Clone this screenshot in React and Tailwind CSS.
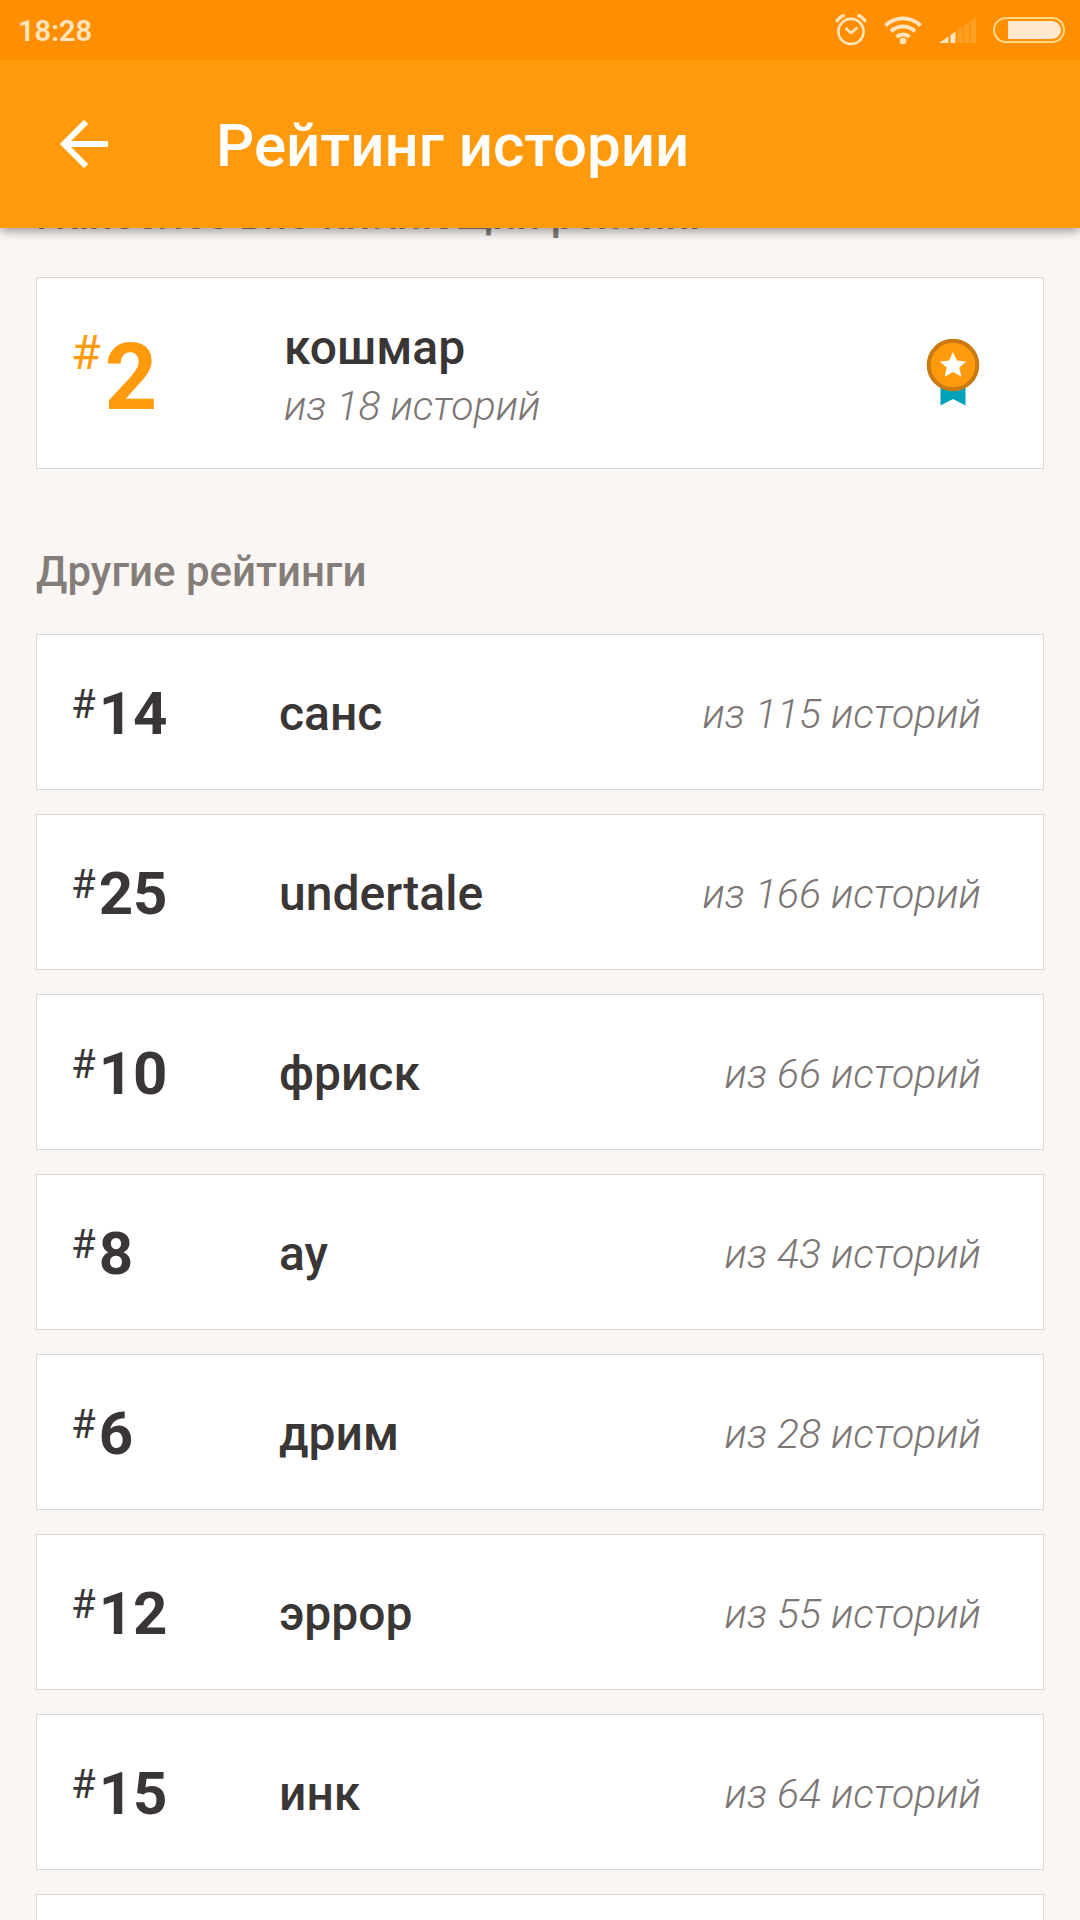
import React from 'react';

const rankings = [
  { rank: 14, tag: 'санс', total: 115 },
  { rank: 25, tag: 'undertale', total: 166 },
  { rank: 10, tag: 'фриск', total: 66 },
  { rank: 8, tag: 'ау', total: 43 },
  { rank: 6, tag: 'дрим', total: 28 },
  { rank: 12, tag: 'эррор', total: 55 },
  { rank: 15, tag: 'инк', total: 64 },
];

const StatusBar = () => (
  <div className="flex h-15 items-center justify-between bg-[#ff8f00] pl-[18px] pr-[15px] text-[#ffe4c0]">
    <span className="pt-0.5 text-[29px] leading-8 font-semibold">18:28</span>
    <div className="flex items-center">
      {/* Alarm */}
      <svg className="mr-4 h-8 w-8" viewBox="0 0 32 32" fill="none" stroke="currentColor" strokeWidth="2.6">
        <circle cx="16" cy="17.500" r="12.6" />
        <path d="M10.5 14l5.5 5 6.500-5.500" />
        <path d="M1.500 8Q4 3 9.500 1M30.500 8Q28 3 22.500 1" strokeWidth="3.200" />
      </svg>
      {/* Wi-Fi */}
      <svg className="mr-4 h-8 w-10" viewBox="0 0 40 32" fill="none" stroke="currentColor" strokeWidth="3.900">
        <path d="M2.500 11.500a25 25 0 0 1 35 0M8 17.500a17 17 0 0 1 24 0M13.500 23a9.500 9.500 0 0 1 13 0" />
        <circle cx="20" cy="27" r="3.300" fill="currentColor" stroke="none" />
      </svg>
      {/* Signal */}
      <svg className="mr-4 h-7 w-[38px]" viewBox="0 0 38 28" fill="currentColor">
        <path d="M0 27l9.500-6.500V27zM11.500 19l5-3.500V27h-5z" />
        <path
          opacity=".2"
          d="M18.500 13.500l5-3.500v17h-5zM25 9.500l5-3.500v21h-5zM31.500 5l5.500-4v26h-5.500z"
        />
      </svg>
      {/* Battery */}
      <svg className="h-7 w-[72px]" viewBox="0 0 72 28">
        <rect x="1" y="2" width="70" height="24" rx="12" fill="none" stroke="#ffd98a" strokeWidth="2" />
        <path d="M15 5h44a9 9 0 0 1 0 18H15z" fill="#ffe8cf" />
      </svg>
    </div>
  </div>
);

const Medal = () => (
  <svg className="mb-0.5 h-[67px] w-[54px]" viewBox="0 0 54 67" role="img" aria-label="Награда">
    <path d="M14.500 44h25v22.500L27 60l-12.500 6.500z" fill="#00a2b8" />
    <circle cx="27" cy="26" r="24.300" fill="#ff9a0c" stroke="#cb7a11" strokeWidth="4" />
    <path
      d="M27 13l3.900 8.500 9.300.9-6.900 6.200 2 9.200-8.300-4.700-8.300 4.700 2-9.200-6.900-6.200 9.300-.9z"
      fill="#fff"
    />
  </svg>
);

const RankingRow = ({ rank, tag, total }) => (
  <li className="flex min-h-[156px] items-center border border-[#ddd7d3] bg-white pt-1 pl-[34px] pr-[62px]">
    <div className="flex w-[208px] shrink-0 items-start text-[#3a3635]">
      <span className="mr-[3px] text-[40px] leading-[48px]">#</span>
      <span className="text-[60px] leading-[66px] font-bold">{rank}</span>
    </div>
    <span className="flex-1 text-[48px] leading-14 font-medium text-[#3a3635]">{tag}</span>
    <span className="text-[41px] leading-12 font-light text-[#7c7776] italic">из {total} историй</span>
  </li>
);

const App = () => {
  return (
    <div className="flex h-screen flex-col overflow-hidden bg-[#faf6f3] font-['Roboto','Noto_Sans',sans-serif]">
      <header className="relative z-10 shrink-0 bg-[#ff9a0c] shadow-[0_3px_10px_rgba(0,0,0,0.4)]">
        <StatusBar />
        <div className="flex h-[168px] items-center pl-15">
          <button type="button" aria-label="Назад" className="mr-27 text-white">
            <svg className="h-12 w-12" viewBox="0 0 48 48" fill="none" stroke="currentColor" strokeWidth="6">
              <path d="M48 24H5M26 2L4 24l22 22" />
            </svg>
          </button>
          <h1 className="pt-1 text-[60px] leading-[70px] font-medium text-white">Рейтинг истории</h1>
        </div>
      </header>

      {/* The list is scrolled, its first heading sits under the header */}
      <main className="-mt-[38px] min-h-0 flex-1 overflow-hidden px-9">
        <h2 className="text-[42px] leading-[50px] font-medium text-[#857d79]">
          Наиболее впечатляющий рейтинг
        </h2>
        <section className="mt-[37px] flex min-h-[192px] items-center border border-[#ddd7d3] bg-white pl-[34px] pr-[63px]">
          <div className="flex w-[213px] shrink-0 items-start pt-2.5 text-[#ff9a0c]">
            <span className="mr-1 text-[48px] leading-[50px]">#</span>
            <span className="text-[92px] leading-[100px] font-bold">2</span>
          </div>
          <div className="flex flex-1 flex-col pt-2.5">
            <span className="text-[48px] leading-14 font-medium text-[#3a3635]">кошмар</span>
            <span className="text-[41px] leading-15 font-light text-[#7c7776] italic">из 18 историй</span>
          </div>
          <Medal />
        </section>

        <h2 className="mt-[78px] text-[42px] leading-[50px] font-medium text-[#857d79]">Другие рейтинги</h2>
        <ul className="mt-[37px] flex flex-col gap-6">
          {rankings.map(item => (
            <RankingRow key={item.tag} rank={item.rank} tag={item.tag} total={item.total} />
          ))}
          <li className="min-h-[156px] border border-[#ddd7d3] bg-white" />
        </ul>
      </main>
    </div>
  );
};

export default App;
